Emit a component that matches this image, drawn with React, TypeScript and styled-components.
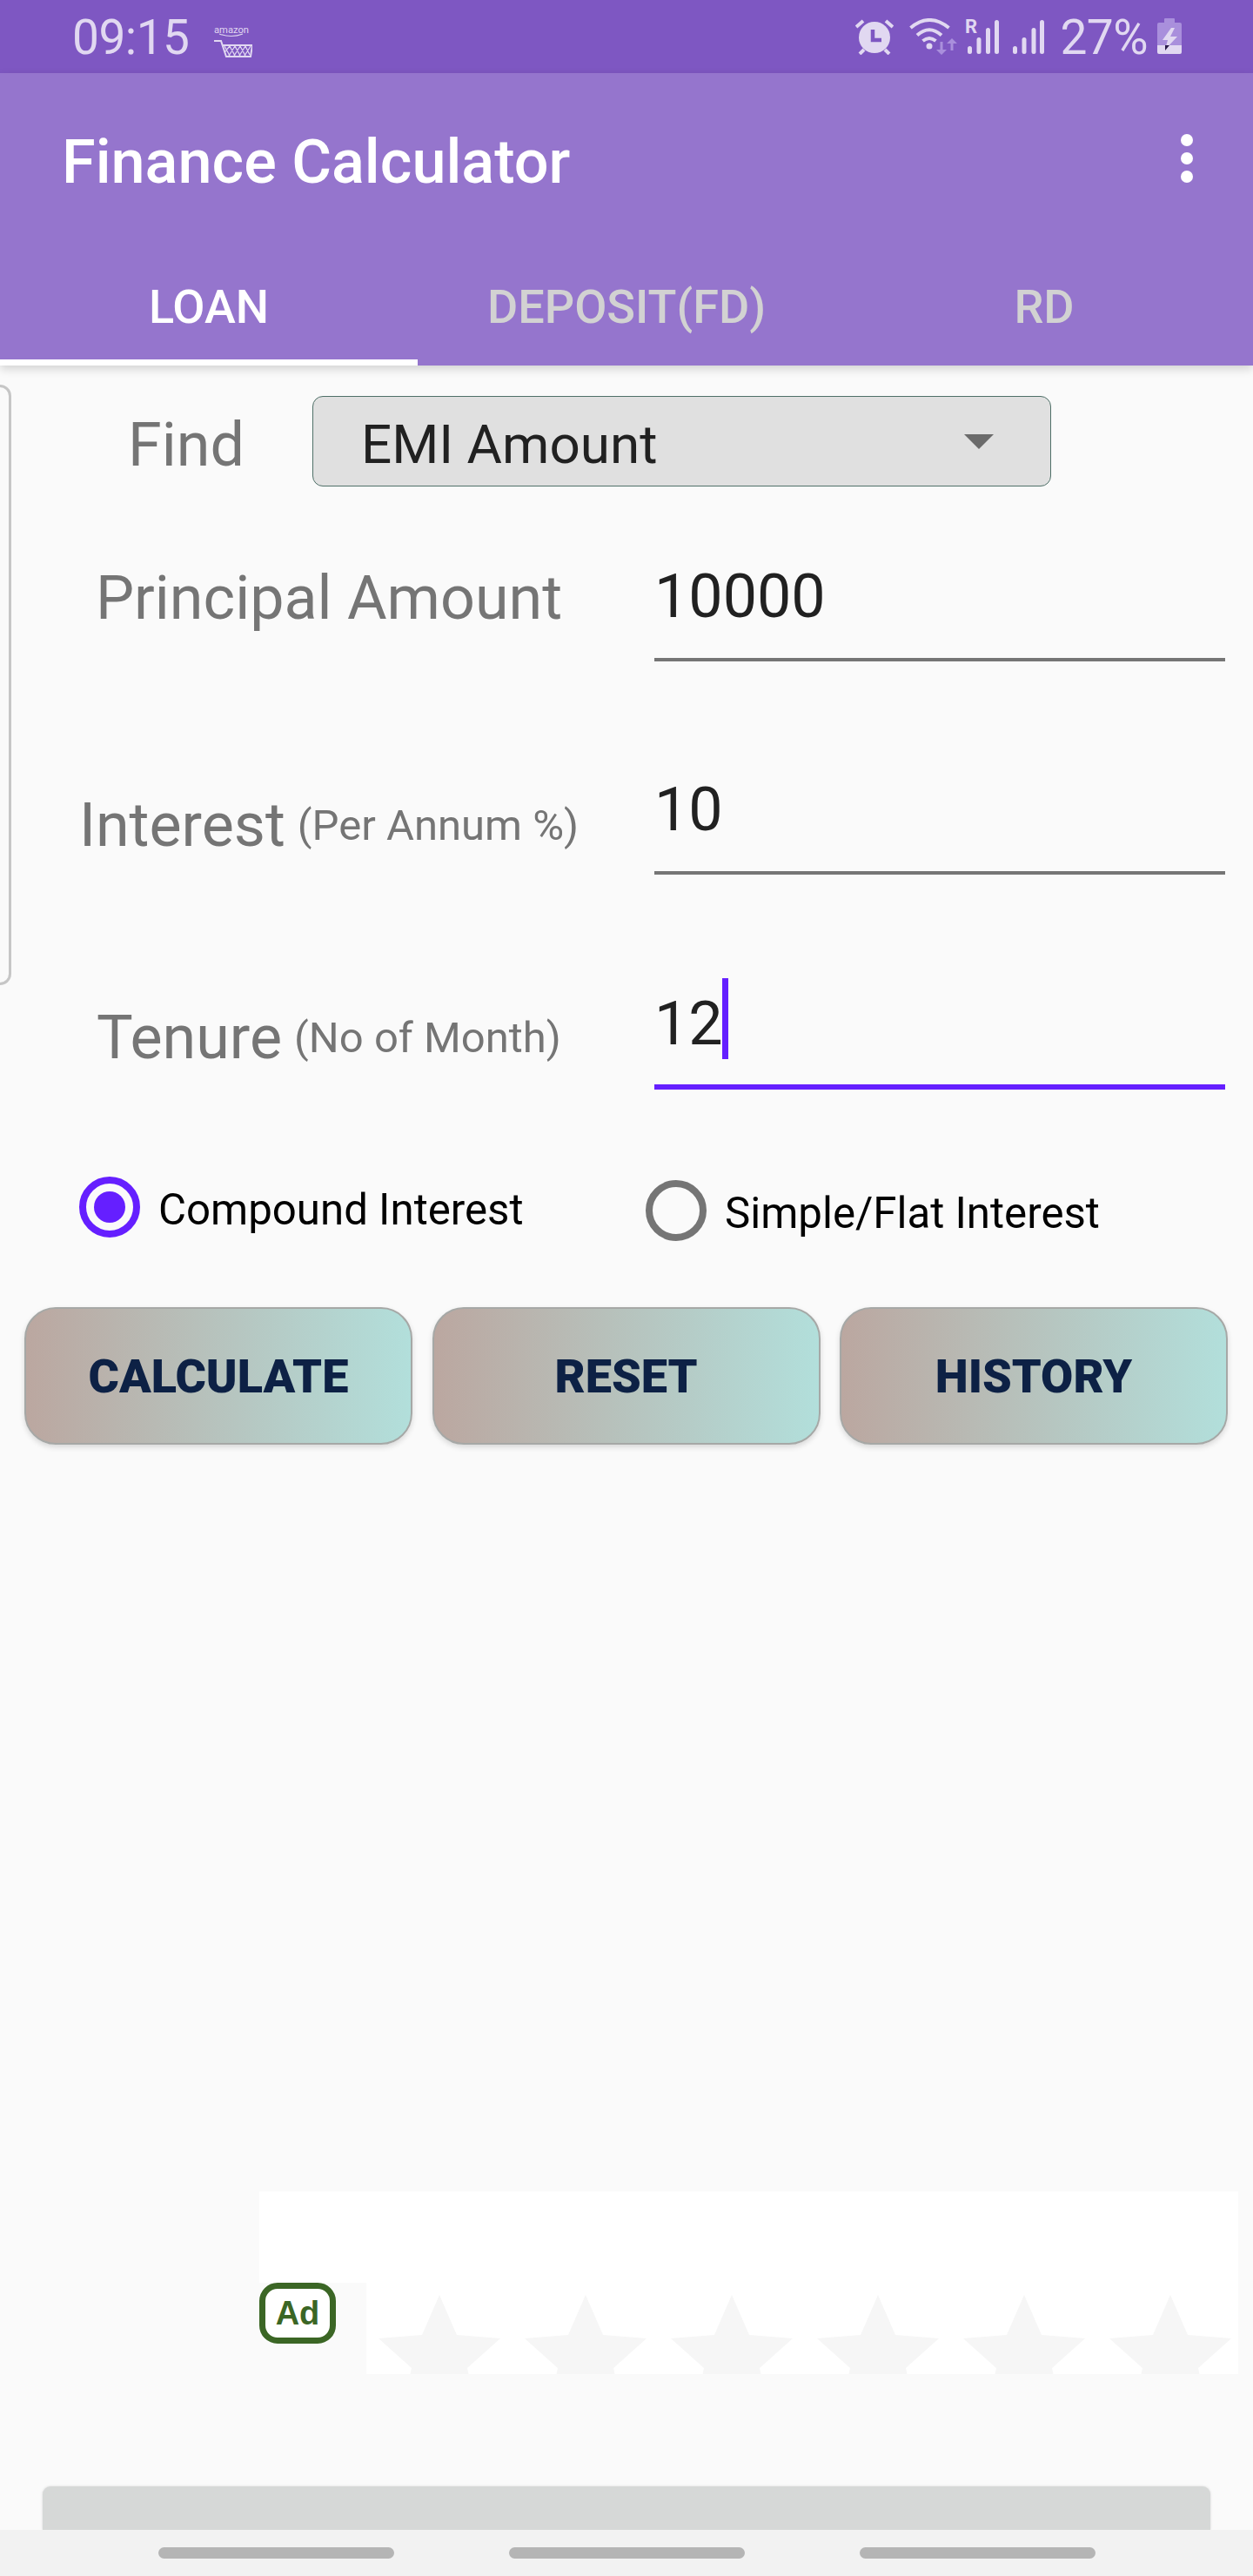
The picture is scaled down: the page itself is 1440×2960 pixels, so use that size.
import React from 'react';
import styled, { createGlobalStyle } from 'styled-components';

const GlobalStyle = createGlobalStyle`
  html, body {
    margin: 0;
    padding: 0;
    background: #fafafa;
  }
  * {
    box-sizing: border-box;
  }
`;

const Screen = styled.div`
  display: flex;
  flex-direction: column;
  width: 1440px;
  height: 2960px;
  overflow: hidden;
  background: #fafafa;
  font-family: Roboto, "Liberation Sans", sans-serif;
`;

const StatusBar = styled.div`
  display: flex;
  align-items: center;
  height: 84px;
  flex-shrink: 0;
  padding: 0 82px 0 83px;
  background: #7e57c2;
  color: #e1d8f1;
`;

const StatusText = styled.span<{ $gap?: number }>`
  margin-left: ${(p) => p.$gap ?? 0}px;
  padding-top: 3px;
  font-size: 55px;
  font-weight: 400;
  line-height: 81px;
  letter-spacing: -0.5px;
`;

const StatusIcon = styled.svg<{ $gap?: number; $drop?: number }>`
  display: block;
  flex-shrink: 0;
  margin-left: ${(p) => p.$gap ?? 0}px;
  margin-top: ${(p) => p.$drop ?? 0}px;
`;

const StatusRight = styled.div`
  display: flex;
  align-items: center;
  margin-left: auto;
`;

const AppBar = styled.header`
  flex-shrink: 0;
  height: 336px;
  background: #9575cd;
  box-shadow: 0 4px 10px rgba(0, 0, 0, 0.16);
  position: relative;
  z-index: 1;
`;

const Toolbar = styled.div`
  display: flex;
  align-items: center;
  justify-content: space-between;
  height: 196px;
  padding: 0 69px 0 71px;
`;

const Title = styled.h1`
  margin: 0;
  padding-top: 8px;
  color: #fff;
  font-size: 70.2px;
  font-weight: 500;
`;

const MenuDots = styled.div`
  display: flex;
  flex-direction: column;
  gap: 7px;
`;

const MenuDot = styled.span`
  width: 14px;
  height: 14px;
  border-radius: 50%;
  background: #fff;
`;

const Tabs = styled.div`
  display: flex;
  height: 140px;
`;

const Tab = styled.div<{ $active?: boolean }>`
  display: flex;
  align-items: center;
  justify-content: center;
  flex: 1;
  padding-top: 12px;
  border-bottom: 7px solid ${(p) => (p.$active ? '#fff' : 'transparent')};
  color: ${(p) => (p.$active ? '#fff' : '#d2d2d2')};
  font-size: 54px;
  font-weight: 500;
`;

const Content = styled.main`
  display: flex;
  flex: 1;
  min-height: 0;
`;

const PageEdge = styled.div`
  flex-shrink: 0;
  width: 13px;
  height: 690px;
  margin-top: 22px;
  border: 3px solid #c6c6c6;
  border-left: none;
  border-radius: 0 14px 14px 0;
`;

const Form = styled.div`
  flex: 1;
  padding-top: 35px;
`;

const FindRow = styled.div`
  display: flex;
  align-items: center;
  padding-left: 56px;
  margin-bottom: 54px;
`;

const FindLabel = styled.span`
  width: 290px;
  padding-top: 8px;
  color: #757575;
  font-size: 70px;
  text-align: center;
`;

const Spinner = styled.div`
  display: flex;
  align-items: center;
  justify-content: space-between;
  width: 849px;
  height: 104px;
  padding: 7px 65px 0 55px;
  border: 1.5px solid #4f7068;
  border-radius: 12px;
  background: #e0e0e0;
  color: #212121;
  font-size: 62px;
`;

const SpinnerArrow = styled.span`
  width: 0;
  height: 0;
  margin-bottom: 7px;
  border-left: 17px solid transparent;
  border-right: 17px solid transparent;
  border-top: 17px solid #6b6b6b;
`;

const InputRow = styled.div<{ $space?: number }>`
  display: flex;
  margin-top: ${(p) => p.$space ?? 0}px;
`;

const LabelCell = styled.div<{ $drop?: number }>`
  display: flex;
  align-items: center;
  justify-content: center;
  width: 739px;
  height: 140px;
  padding: ${(p) => p.$drop ?? 0}px 9px 0 0;
  gap: 14px;
`;

const Label = styled.span`
  color: #757575;
  font-size: 70px;
  white-space: nowrap;
`;

const LabelHint = styled.span`
  color: #757575;
  font-size: 49px;
  white-space: nowrap;
`;

const Field = styled.div<{ $focused?: boolean }>`
  display: flex;
  align-items: center;
  width: 656px;
  height: 147px;
  border-bottom: ${(p) => (p.$focused ? '6px solid #651fff' : '4px solid #757575')};
  color: #212121;
  font-size: 70px;
`;

const Caret = styled.span`
  width: 7px;
  height: 93px;
  margin: 0 0 10px -1px;
  background: #651fff;
`;

const RadioRow = styled.div`
  display: flex;
  align-items: flex-start;
  height: 74px;
  margin-top: 100px;
  padding-left: 78px;
`;

const RadioItem = styled.label<{ $drop?: number }>`
  display: flex;
  align-items: center;
  gap: 21px;
  width: 651px;
  margin-top: ${(p) => p.$drop ?? 0}px;
  color: #000;
  font-size: 49.2px;
`;

const RadioText = styled.span`
  padding-top: 6px;
`;

const RadioMark = styled.span<{ $checked?: boolean }>`
  display: flex;
  align-items: center;
  justify-content: center;
  width: 70px;
  height: 70px;
  flex-shrink: 0;
  border: 8px solid ${(p) => (p.$checked ? '#651fff' : '#757575')};
  border-radius: 50%;

  &::after {
    content: '';
    display: ${(p) => (p.$checked ? 'block' : 'none')};
    width: 36px;
    height: 36px;
    border-radius: 50%;
    background: #651fff;
  }
`;

const ButtonRow = styled.div`
  display: flex;
  gap: 22.5px;
  margin-top: 76px;
  padding-left: 15px;
`;

const ActionButton = styled.button`
  width: 446px;
  height: 158px;
  padding: 0;
  border: 2px solid #a6a8a6;
  border-radius: 36px;
  background: linear-gradient(90deg, #bba7a0 0%, #b2dfdb 100%);
  box-shadow: 0 3px 6px rgba(0, 0, 0, 0.14);
  color: #0d2145;
  font-family: inherit;
  font-size: 54px;
  font-weight: 900;
`;

const AdBanner = styled.aside`
  flex-shrink: 0;
  width: 1125px;
  height: 210px;
  margin: 0 0 129px 298px;
`;

const AdTop = styled.div`
  height: 105px;
  background: #fff;
`;

const AdBottom = styled.div`
  display: flex;
  height: 105px;
`;

const AdGutter = styled.div`
  flex-shrink: 0;
  width: 123px;
`;

const AdBadge = styled.span`
  display: flex;
  align-items: center;
  justify-content: center;
  width: 88px;
  height: 70px;
  border: 7.5px solid #3b6625;
  border-radius: 21px;
  background: #fff;
  color: #3b6625;
  font-family: "Liberation Sans", sans-serif;
  font-size: 38px;
  font-weight: 700;
`;

const StarStrip = styled.div`
  display: flex;
  flex: 1;
  overflow: hidden;
  background: #fff;
`;

const Star = styled.svg`
  display: block;
  flex-shrink: 0;
  width: 168px;
  height: 105px;
`;

const AdSheet = styled.div`
  flex-shrink: 0;
  width: 1342px;
  height: 50px;
  margin-left: 49px;
  border-radius: 9px 9px 0 0;
  background: #d6d8d7;
  box-shadow: 0 0 3px rgba(0, 0, 0, 0.14);
`;

const NavBar = styled.nav`
  display: flex;
  flex-shrink: 0;
  align-items: center;
  gap: 132px;
  height: 53px;
  padding-left: 182px;
  background: #f2f2f2;
`;

const NavPill = styled.span`
  width: 271px;
  height: 13px;
  border-radius: 7px;
  background: #b5b5b5;
`;

const light = '#e1d8f1';
const dim = '#a98fdc';

const AmazonIcon = () => (
  <StatusIcon $gap={29} $drop={12} width={44} height={44} viewBox="0 -4 44 44">
    <text x="0" y="8" fontFamily="Roboto, sans-serif" fontSize="11" fill={light} textLength="40" lengthAdjust="spacingAndGlyphs">amazon</text>
    <path d="M6 9 Q20 14 33 9" fill="none" stroke={light} strokeWidth="1.2" />
    <path d="M0 17 H8 L14 35 H42 L44 22 H10" fill="none" stroke={light} strokeWidth="2" />
    <path d="M12 23 L18 34 M18 23 L24 34 M24 23 L30 34 M30 23 L36 34 M36 23 L41 33 M18 23 L12 30 M24 23 L17 34 M30 23 L23 34 M36 23 L29 34 M42 23 L35 34" fill="none" stroke={light} strokeWidth="1.3" />
  </StatusIcon>
);

const AlarmIcon = () => (
  <StatusIcon width={44} height={42} viewBox="0 0 44 42">
    <circle cx="22" cy="22" r="18" fill={light} />
    <path d="M1 10 L9 3 M35 3 L43 10 M5 41 L10 36 M39 41 L34 36" stroke={light} strokeWidth="4" fill="none" />
    <path d="M20 13 V25 H30" stroke="#7e57c2" strokeWidth="4.5" fill="none" />
  </StatusIcon>
);

const WifiIcon = () => (
  <StatusIcon $gap={18} width={55} height={42} viewBox="0 0 55 42">
    <path d="M1.5 11 Q23 -7 45.5 11 M9 19.5 Q23 7 37 19.5 M15.5 26 Q23 20 30.5 26" fill="none" stroke={light} strokeWidth="4" />
    <circle cx="23" cy="32" r="3.5" fill={light} />
    <path d="M35.5 27 H38.5 V36 H43 L37 42 L31 36 H35.5 Z M47.5 37 H50.5 V29 H55 L49 23 L43 29 H47.5 Z" fill={dim} />
  </StatusIcon>
);

const SignalBars = ({ xs }: { xs: number[] }) => (
  <>
    {xs.map((x, i) => (
      <rect key={x} x={x - 2.5} y={[31, 21, 10, 1][i]} width="5" height={[9, 19, 30, 39][i]} rx="2.5" fill={light} />
    ))}
  </>
);

const BatteryIcon = () => (
  <StatusIcon $gap={11} width={28} height={42} viewBox="0 0 28 42">
    <path d="M8 1 Q8 0 9 0 H19 Q20 0 20 1 V5 H26 Q28 5 28 7 V31 H0 V7 Q0 5 2 5 H8 Z" fill={dim} />
    <path d="M0 31 H28 V39 Q28 41 26 41 H2 Q0 41 0 39 Z" fill={light} />
    <path d="M16 11 L6 25 H12 L9 36 L23 21 H15 L20 11 Z" fill={light} />
    <path d="M9 31 H14 L9 37 Z" fill="#2a1a4a" />
  </StatusIcon>
);

const rows = [
  { label: 'Principal Amount', value: '10000', drop: 8 },
  { label: 'Interest', hint: '(Per Annum %)', value: '10', drop: 40, space: 98 },
  { label: 'Tenure', hint: '(No of Month)', value: '12', drop: 34, space: 100, focused: true },
];

const App: React.FC = () => {
  return (
    <Screen>
      <GlobalStyle />
      <StatusBar>
        <StatusText>09:15</StatusText>
        <AmazonIcon />
        <StatusRight>
          <AlarmIcon />
          <WifiIcon />
          <StatusIcon $gap={9} width={39} height={50} viewBox="0 -5 39 50">
            <text x="0" y="16" fontFamily="Roboto, sans-serif" fontSize="22" fontWeight="700" fill={light}>R</text>
            <SignalBars xs={[5.5, 16, 26.5, 36.5]} />
          </StatusIcon>
          <StatusIcon $gap={16} width={36} height={40} viewBox="0 0 36 40">
            <SignalBars xs={[2.5, 13, 24, 33.5]} />
          </StatusIcon>
          <StatusText $gap={18}>27%</StatusText>
          <BatteryIcon />
        </StatusRight>
      </StatusBar>

      <AppBar>
        <Toolbar>
          <Title>Finance Calculator</Title>
          <MenuDots>
            <MenuDot />
            <MenuDot />
            <MenuDot />
          </MenuDots>
        </Toolbar>
        <Tabs>
          <Tab $active>LOAN</Tab>
          <Tab>DEPOSIT(FD)</Tab>
          <Tab>RD</Tab>
        </Tabs>
      </AppBar>

      <Content>
        <PageEdge />
        <Form>
          <FindRow>
            <FindLabel>Find</FindLabel>
            <Spinner>
              EMI Amount
              <SpinnerArrow />
            </Spinner>
          </FindRow>

          {rows.map((row) => (
            <InputRow key={row.label} $space={row.space}>
              <LabelCell $drop={row.drop}>
                <Label>{row.label}</Label>
                {row.hint && <LabelHint>{row.hint}</LabelHint>}
              </LabelCell>
              <Field $focused={row.focused}>
                {row.value}
                {row.focused && <Caret />}
              </Field>
            </InputRow>
          ))}

          <RadioRow>
            <RadioItem>
              <RadioMark $checked />
              <RadioText>Compound Interest</RadioText>
            </RadioItem>
            <RadioItem $drop={4}>
              <RadioMark />
              <RadioText>Simple/Flat Interest</RadioText>
            </RadioItem>
          </RadioRow>

          <ButtonRow>
            <ActionButton>CALCULATE</ActionButton>
            <ActionButton>RESET</ActionButton>
            <ActionButton>HISTORY</ActionButton>
          </ButtonRow>
        </Form>
      </Content>

      <AdBanner>
        <AdTop />
        <AdBottom>
          <AdGutter>
            <AdBadge>Ad</AdBadge>
          </AdGutter>
          <StarStrip>
            {[0, 1, 2, 3, 4, 5].map((i) => (
              <Star key={i} viewBox="0 0 168 105">
                <polygon points="84,14 104,60 154,64 116,98 127,150 84,125 41,150 52,98 14,64 64,60" fill="#f6f6f6" />
              </Star>
            ))}
          </StarStrip>
        </AdBottom>
      </AdBanner>

      <AdSheet />
      <NavBar>
        <NavPill />
        <NavPill />
        <NavPill />
      </NavBar>
    </Screen>
  );
};

export default App;
